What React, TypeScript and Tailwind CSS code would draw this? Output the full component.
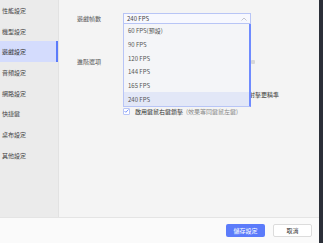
import React from "react";

const FONT = { fontFamily: '"Noto Sans CJK TC", "Noto Sans", sans-serif' };

const menu = ["性能設定", "機型設定", "遊戲設定", "音頻設定", "網路設定", "快捷鍵", "桌布設定", "其他設定"];
const fpsOptions = ["60 FPS(預設)", "90 FPS", "120 FPS", "144 FPS", "165 FPS", "240 FPS"];

function Sidebar() {
  return (
    <div className="flex w-[59px] shrink-0 flex-col border-r border-[#e2e2e2] bg-[#ebebeb]">
      {menu.map((label) => {
        const active = label === "遊戲設定";
        return (
          <div
            key={label}
            className={
              active
                ? "flex h-[20.7px] items-center border-r-[2px] border-[#5b7bfa] bg-[#d4dcfd] pl-[2px] text-[6px] text-[#333]"
                : "flex h-[20.7px] items-center pl-[2px] text-[6px] text-[#444]"
            }
          >
            {label}
          </div>
        );
      })}
    </div>
  );
}

function FpsDropdown() {
  return (
    <div className="absolute left-[64px] top-[24px] flex w-[128px] flex-col border-b border-l border-[#b8c5f6] border-r-[2px] border-r-[#6f8bff] bg-[#f4f5f8]">
      {fpsOptions.map((opt) => (
        <div
          key={opt}
          className={
            opt === "240 FPS"
              ? "flex h-[13.7px] items-center bg-[#e2e7f7] pl-[4px] text-[6px] text-[#555]"
              : "flex h-[13.7px] items-center pl-[4px] text-[6px] text-[#555]"
          }
        >
          {opt}
        </div>
      ))}
    </div>
  );
}

function Main() {
  return (
    <div className="relative flex-1 bg-[#f4f4f4] pl-[18px]">
      <div className="flex pt-[13px]">
        <div className="flex h-[11px] w-[46px] items-center text-[6px] text-[#555]">遊戲幀數</div>
        <div className="flex h-[11px] w-[128px] items-center justify-between border border-[#b8c5f6] bg-[#f7f8fe] px-[3px] text-[6px] text-[#444]">
          <span>240 FPS</span>
          <svg width="6" height="4" viewBox="0 0 6 4" fill="none" stroke="#b5b8c4" strokeWidth="0.8">
            <path d="M0.5 3.5 L3 1 L5.5 3.5" />
          </svg>
        </div>
      </div>

      <div className="mt-[33px] flex">
        <div className="flex h-[9px] w-[46px] items-center text-[6px] text-[#555]">進階選項</div>
        <div className="flex flex-col">
          <div className="flex h-[9px] w-[132px] items-center justify-end">
            <span className="h-[4px] w-[4px] rounded-[1px] bg-[#d8d8d8]" />
          </div>
          <div className="mt-[24px] flex h-[8px] w-[156px] items-center justify-end text-[6px] text-[#333]">
            射擊更精準
          </div>
          <div className="mt-[9px] flex h-[8px] items-center gap-[5px] text-[6px]">
            <span className="flex h-[7px] w-[7px] items-center justify-center rounded-[1px] border border-[#b8c5f6] bg-white">
              <svg width="5" height="4" viewBox="0 0 5 4" fill="none" stroke="#5b7bfa" strokeWidth="0.8">
                <path d="M0.5 2 L1.8 3.3 L4.5 0.5" />
              </svg>
            </span>
            <span className="text-[#333]">
              啟用鍵鼠右鍵鎖擊<span className="ml-[3px] text-[#888]">(效果等同鍵鼠左鍵)</span>
            </span>
          </div>
        </div>
      </div>

      <FpsDropdown />
    </div>
  );
}

export default function App() {
  return (
    <div className="flex h-[243px] w-[323px] overflow-hidden" style={FONT}>
      <div className="flex w-[319px] flex-col">
        <div className="flex h-[217px]">
          <Sidebar />
          <Main />
        </div>
        <div className="flex flex-1 items-center justify-end gap-[8px] border-t border-[#e4e4e4] bg-[#fafafa] pr-[7px]">
          <button className="flex h-[13px] w-[39px] items-center justify-center rounded-[2px] bg-[#5b7bfa] text-[6px] text-white">
            儲存設定
          </button>
          <button className="flex h-[13px] w-[39px] items-center justify-center rounded-[2px] border border-[#dcdcdc] bg-white text-[6px] text-[#333]">
            取消
          </button>
        </div>
      </div>
      <div className="w-[4px] bg-[#2b2f38]" />
    </div>
  );
}
